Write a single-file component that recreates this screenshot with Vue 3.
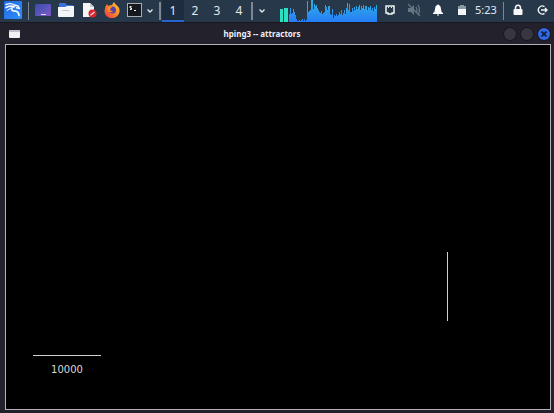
<script setup>
import { ref } from 'vue'

const active = ref(1)
const workspaces = [1, 2, 3, 4]
// CPU load samples, one per pixel column
const load = [
  8, 14, 8, 9, 13, 10, 7, 3, 1, 1, 2, 1, 2, 3, 1, 3, 1, 2,
  21, 10, 11, 12, 22, 22, 13, 18, 16, 17, 14, 12, 10, 9, 11, 8, 9, 10,
  17, 15, 12, 16, 16, 8, 7, 13, 4, 7, 6, 8, 6, 7, 10, 8, 12, 7, 9, 12, 8, 14, 19, 12,
  18, 10, 10, 14, 11, 15, 12, 16, 13, 15, 17, 12, 16, 14, 17, 13, 16, 16, 12, 15, 14, 16, 12, 14,
  11, 15, 13, 17
]
</script>

<template>
  <div class="screen">
    <header class="panel">
      <button class="menu" aria-label="Applications">
        <svg width="18" height="18" viewBox="0 0 18 18">
          <defs>
            <linearGradient id="logo" x2="1" y2="1"><stop stop-color="#2267e6" /><stop offset="1" stop-color="#2d8ffa" /></linearGradient>
          </defs>
          <rect width="18" height="18" rx="1" fill="url(#logo)" />
          <g fill="none" stroke="#f4faff" stroke-linecap="round" stroke-linejoin="round">
            <path d="M2 3.500Q7 1.500 10.500 4L14 5L15.500 7.500L12.500 6.800" stroke-width="1.400" />
            <path d="M2 6.500Q6 4.500 10.500 5.500Q6.500 7 8 9Q9 10.300 11.500 10.200Q14.500 10.500 15 14.500" stroke-width="1.700" />
            <path d="M3 9.500L7 7" stroke-width="1" />
          </g>
        </svg>
      </button>
      <span class="rule thin"></span>
      <button class="launcher" aria-label="Show desktop">
        <svg width="16" height="14" viewBox="0 0 16 14">
          <defs>
            <linearGradient id="desk" x2="1" y2="1"><stop stop-color="#3c4aa8" /><stop offset=".5" stop-color="#5a55bd" /><stop offset="1" stop-color="#8058c4" /></linearGradient>
          </defs>
          <rect y="1" width="16" height="12" rx="1" fill="url(#desk)" />
          <path d="M6 11.500h5" stroke="#dcd8f2" />
        </svg>
      </button>
      <button class="launcher" aria-label="Files">
        <svg width="16" height="16" viewBox="0 0 16 16">
          <path d="M1 2q0-1 1-1h5l2 2h6v5H1z" fill="#3b70d9" />
          <path d="M0 5h7l2-1h7v10q0 1-1 1H1q-1 0-1-1z" fill="#f3f5f6" />
          <path d="M4 8.500h7" stroke="#c3c8cc" />
        </svg>
      </button>
      <button class="launcher" aria-label="Text editor">
        <svg width="16" height="16" viewBox="0 0 16 16">
          <path d="M2 1h7l4 4v10H2z" fill="#f5f5f6" />
          <path d="M9 1v4h4z" fill="#c7cbd0" />
          <circle cx="11.500" cy="11.500" r="4" fill="#d7262f" />
          <path d="M9.500 13.200L13.500 10" stroke="#ffd9d9" stroke-width="1.300" />
        </svg>
      </button>
      <button class="launcher" aria-label="Firefox">
        <svg width="16" height="16" viewBox="0 0 16 16">
          <defs>
            <linearGradient id="fox" x1="1" x2="0" y2="1"><stop stop-color="#ffd43b" /><stop offset=".5" stop-color="#ff8127" /><stop offset="1" stop-color="#ee304f" /></linearGradient>
          </defs>
          <path d="M3 2l1 2q2-1 4-1l2-3q1 2 3 3.500Q16 6 15.500 9.500A7.500 6.800 0 0 1 .5 9Q.5 5 3 2z" fill="url(#fox)" />
          <circle cx="8.500" cy="8" r="3.500" fill="#5942a5" />
          <path d="M3 5q3-1 5 .6L6 7q0 2 3 2-1 2-4 1Q3 8 3 5z" fill="#ff8a28" />
        </svg>
      </button>
      <button class="launcher" aria-label="Terminal">
        <svg width="16" height="16" viewBox="0 0 16 16">
          <rect x=".5" y="1.500" width="14" height="13" fill="#15191d" stroke="#a8adb0" />
          <path d="M4.500 4.500H3v1.500h1.500v1.500H3M7 8.500h2" fill="none" stroke="#fff" />
        </svg>
      </button>
      <button class="more" aria-label="More terminals">
        <svg width="6" height="4" viewBox="0 0 6 4"><path d="M.5 .5L3 3L5.500 .5" fill="none" stroke="#e6ebee" stroke-width="1.300" /></svg>
      </button>
      <span class="rule"></span>
      <nav class="spaces" aria-label="Workspaces">
        <button v-for="n in workspaces" :key="n" :class="['space', { on: n === active }]" @click="active = n">{{ n }}</button>
      </nav>
      <span class="rule"></span>
      <button class="more wide" aria-label="Window list">
        <svg width="6" height="4" viewBox="0 0 6 4"><path d="M.5 .5L3 3L5.500 .5" fill="none" stroke="#e6ebee" stroke-width="1.300" /></svg>
      </button>

      <svg class="load" width="98" height="22" viewBox="0 0 98 22" role="img" aria-label="CPU load">
        <defs>
          <linearGradient id="cpu" gradientUnits="userSpaceOnUse" x1="0" y1="0" x2="0" y2="22"><stop stop-color="#27b8dc" /><stop offset=".5" stop-color="#2b98ec" /><stop offset="1" stop-color="#267df8" /></linearGradient>
        </defs>
        <rect x="0" y="9" width="3" height="13" fill="#2ce0c4" />
        <rect x="4" y="8" width="4" height="14" fill="#2ce0c4" />
        <rect v-for="(h, i) in load" :key="i" :x="i + 9" :y="22 - h" width="1" :height="h" fill="url(#cpu)" />
      </svg>
      <button class="tray" aria-label="Network">
        <svg width="12" height="12" viewBox="0 0 12 12">
          <path d="M2 2h8v7H8v1H4V9H2z" fill="none" stroke="#f0f3f5" stroke-width="1.500" />
          <path d="M4.500 3v1M7.500 3v1" stroke="#f0f3f5" />
        </svg>
      </button>
      <button class="tray" aria-label="Volume muted">
        <svg width="14" height="14" viewBox="0 0 14 14">
          <path d="M1 5h3l3-3v10L4 9H1z" fill="#657683" />
          <path d="M9 4q2 3 0 6M11 2q3 5 0 10M1 1l12 12" fill="none" stroke="#657683" stroke-width="1.300" />
        </svg>
      </button>
      <button class="tray" aria-label="Notifications">
        <svg width="12" height="12" viewBox="0 0 12 12">
          <path d="M5 1q1-1 2 0 2 1 2 4 0 3 2 4v1H1V9q2-1 2-4 0-3 2-4zM5 10.500h2v1H5z" fill="#fff" />
        </svg>
      </button>
      <button class="tray" aria-label="Battery">
        <svg width="8" height="10" viewBox="0 0 8 10">
          <path d="M2 0h4v1h2v4H0V1h2z" fill="#8b98a2" />
          <path d="M0 4h8v6H0z" fill="#f3f5f6" />
        </svg>
      </button>
      <time class="clock">5:23</time>
      <span class="rule late"></span>
      <button class="tray" aria-label="Lock screen">
        <svg width="10" height="12" viewBox="0 0 10 12">
          <path d="M2.500 6V4a2.500 2.800 0 0 1 5 0v2" fill="none" stroke="#f6f8f9" stroke-width="1.500" />
          <rect x=".5" y="5" width="9" height="6" rx="1" fill="#f6f8f9" />
        </svg>
      </button>
      <button class="tray" aria-label="Log out">
        <svg width="12" height="12" viewBox="0 0 12 12">
          <path d="M8.500 2.600A4 4 0 1 0 8.500 9.400M5 6h6M9 4l2 2-2 2" fill="none" stroke="#f0f3f5" stroke-width="1.400" />
        </svg>
      </button>
    </header>

    <main class="window">
      <div class="titlebar">
        <svg width="11" height="8" viewBox="0 0 11 8">
          <rect width="11" height="8" rx="1" fill="#f1f1f1" />
          <path d="M0 1h11" stroke="#bfc0c4" stroke-width="2" />
        </svg>
        <h1 class="title">hping3 -- attractors</h1>
        <div class="controls">
          <button class="dot" aria-label="Minimize"></button>
          <button class="dot" aria-label="Maximize"></button>
          <button class="dot close" aria-label="Close">
            <svg width="6" height="6" viewBox="0 0 6 6"><path d="M.5 .5l5 5M5.500 .5L.5 5.500" stroke="#101d3f" stroke-width="1.600" /></svg>
          </button>
        </div>
      </div>
      <section class="plot">
        <span class="mark vertical"></span>
        <div class="scale">10000</div>
      </section>
    </main>
  </div>
</template>

<style>
body {
  margin: 0;
  background: #22212c;
}
</style>

<style scoped>
.screen {
  display: flex;
  flex-direction: column;
  min-height: 100vh;
  font-family: "Noto Sans", sans-serif;
}
.panel {
  display: flex;
  align-items: stretch;
  height: 22px;
  background: #263849;
}
button {
  display: flex;
  align-items: center;
  justify-content: center;
  flex: none;
  padding: 0;
  border: 0;
  background: none;
  color: #e4e9ec;
  font: inherit;
}
svg {
  display: block;
  flex: none;
}
.menu {
  width: 26px;
  padding-bottom: 2px;
}
.launcher {
  width: 23px;
  padding-bottom: 2px;
}
.rule {
  flex: none;
  width: 2px;
  margin: 2px 1px;
  background: #7b8791;
}
.thin {
  width: 1px;
  margin: 2px;
}
.more {
  width: 8px;
  margin-right: 4px;
}
.wide {
  width: 16px;
}
.spaces {
  display: flex;
}
.space {
  width: 22px;
  padding-bottom: 2px;
  font-size: 12px;
}
.space.on {
  background: #1e2c3f;
  box-shadow: inset 0 -2px #2863cf;
}
.load {
  margin-left: auto;
}
.tray {
  width: 24px;
  padding-bottom: 2px;
}
.clock {
  flex: none;
  width: 24px;
  color: #e4e9ec;
  font-size: 11px;
  line-height: 20px;
  text-align: center;
}
.late {
  width: 1px;
  margin: 2px 2px 2px 5px;
}
.window {
  display: flex;
  flex: 1;
  flex-direction: column;
  padding: 0 3px 3px 5px;
  background: #22212c;
  border-top: 1px solid #171820;
}
.titlebar {
  display: flex;
  align-items: center;
  height: 21px;
  padding: 0 1px 0 4px;
}
.title {
  flex: 1;
  margin: 0;
  color: #f0f0f2;
  font-family: "Noto Sans", sans-serif;
  font-size: 8px;
  font-weight: 700;
  line-height: 20px;
  text-align: center;
}
.controls {
  display: flex;
  gap: 5px;
}
.dot {
  width: 12px;
  height: 12px;
  border-radius: 50%;
  background: #383741;
  box-shadow: 0 0 0 1px #191920;
}
.close {
  background: #3269e8;
}
.plot {
  position: relative;
  flex: 1;
  border: 1px solid #b5b0b9;
  background: #000;
}
.mark {
  position: absolute;
  background: #d0d0d0;
}
.vertical {
  left: 441px;
  top: 207px;
  width: 1px;
  height: 69px;
}
.scale {
  position: absolute;
  left: 27px;
  top: 310px;
  width: 68px;
  padding-top: 6px;
  border-top: 1px solid #d0d0d0;
  color: #d8d8d8;
  font-family: "DejaVu Sans", sans-serif;
  font-size: 10px;
  line-height: 16px;
  text-align: center;
}
</style>
